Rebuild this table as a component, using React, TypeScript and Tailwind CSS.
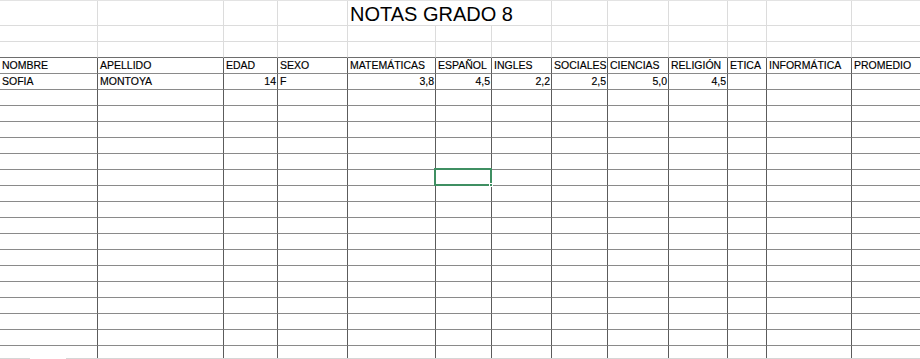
import React from "react";

const COLS =
  "grid grid-cols-[98px_126px_54px_70px_88px_56px_60px_56px_61px_59px_39px_85px_1fr]";

const headers = [
  "NOMBRE",
  "APELLIDO",
  "EDAD",
  "SEXO",
  "MATEMÁTICAS",
  "ESPAÑOL",
  "INGLES",
  "SOCIALES",
  "CIENCIAS",
  "RELIGIÓN",
  "ETICA",
  "INFORMÁTICA",
  "PROMEDIO",
];

// [text, alignRight]
const student: [string, boolean][] = [
  ["SOFIA", false],
  ["MONTOYA", false],
  ["14", true],
  ["F", false],
  ["3,8", true],
  ["4,5", true],
  ["2,2", true],
  ["2,5", true],
  ["5,0", true],
  ["4,5", true],
  ["", false],
  ["", false],
  ["", false],
];

const EMPTY_ROWS = 16;

function LightRow() {
  return (
    <div className={COLS}>
      {headers.map((_, i) => (
        <div
          key={i}
          className={`h-[16px] border-b border-[#dcdcdc] ${
            i < headers.length - 1 ? "border-r" : ""
          } border-r-[#dcdcdc]`}
        />
      ))}
    </div>
  );
}

function Cell({
  text,
  right,
  last,
  bottom = true,
  h = "h-[16px]",
}: {
  text?: string;
  right?: boolean;
  last?: boolean;
  bottom?: boolean;
  h?: string;
}) {
  return (
    <div
      className={`${h} overflow-hidden whitespace-nowrap px-[2px] pr-[1px] leading-[15px] ${
        right ? "text-right" : "text-left"
      } ${bottom ? "border-b border-b-[#8a8a8a]" : ""} ${
        last ? "" : "border-r border-r-[#5c5c5c]"
      }`}
    >
      {text}
    </div>
  );
}

export default function App() {
  return (
    <div className="relative h-[359px] w-[920px] overflow-hidden bg-white font-['Liberation_Sans',Arial,sans-serif] text-[10.5px] text-black [-webkit-text-stroke:0.15px_black]">
      <div className="border-t border-[#e3e3e3]">
        {/* title row */}
        <div className={COLS}>
          {[0, 1, 2, 3].map((i) => (
            <div key={i} className="h-[25px] border-b border-r border-[#dcdcdc]" />
          ))}
          <div className="col-span-3 h-[25px] overflow-visible whitespace-nowrap border-b border-r border-[#dcdcdc] pl-[2px] pt-[1px] text-[20px] leading-[24px] [-webkit-text-stroke:0px]">
            NOTAS GRADO 8
          </div>
          {[7, 8, 9, 10, 11].map((i) => (
            <div key={i} className="h-[25px] border-b border-r border-[#dcdcdc]" />
          ))}
          <div className="h-[25px] border-b border-[#dcdcdc]" />
        </div>
        <LightRow />
        {/* row above header: light sides, dark bottom */}
        <div className={COLS}>
          {headers.map((_, i) => (
            <div
              key={i}
              className={`h-[16px] border-b border-b-[#6e6e6e] ${
                i < headers.length - 1 ? "border-r border-r-[#dcdcdc]" : ""
              }`}
            />
          ))}
        </div>
        {/* header row */}
        <div className={COLS}>
          {headers.map((t, i) => (
            <Cell key={i} text={t} last={i === headers.length - 1} />
          ))}
        </div>
        {/* data */}
        <div className={COLS}>
          {student.map(([t, r], i) => (
            <Cell key={i} text={t} right={r} last={i === student.length - 1} />
          ))}
        </div>
        {Array.from({ length: EMPTY_ROWS }).map((_, r) => (
          <div key={r} className={COLS}>
            {headers.map((_, i) => (
              <Cell key={i} last={i === headers.length - 1} />
            ))}
          </div>
        ))}
        {/* cut-off row */}
        <div className={COLS}>
          {headers.map((_, i) => (
            <Cell key={i} h="h-[12px]" bottom={false} last={i === headers.length - 1} />
          ))}
        </div>
        <div className="flex h-[1px]">
          <div className="w-[30px] bg-[#d6d6d6]" />
          <div className="w-[36px]" />
          <div className="flex-1 bg-[#d6d6d6]" />
        </div>
      </div>

      {/* active cell */}
      <div className="absolute left-[434px] top-[168px] h-[18px] w-[58px] border-2 border-[#3f8f62]" />
      <div className="absolute left-[489px] top-[183px] h-[4px] w-[4px] border border-white bg-[#3f8f62]" />
    </div>
  );
}
